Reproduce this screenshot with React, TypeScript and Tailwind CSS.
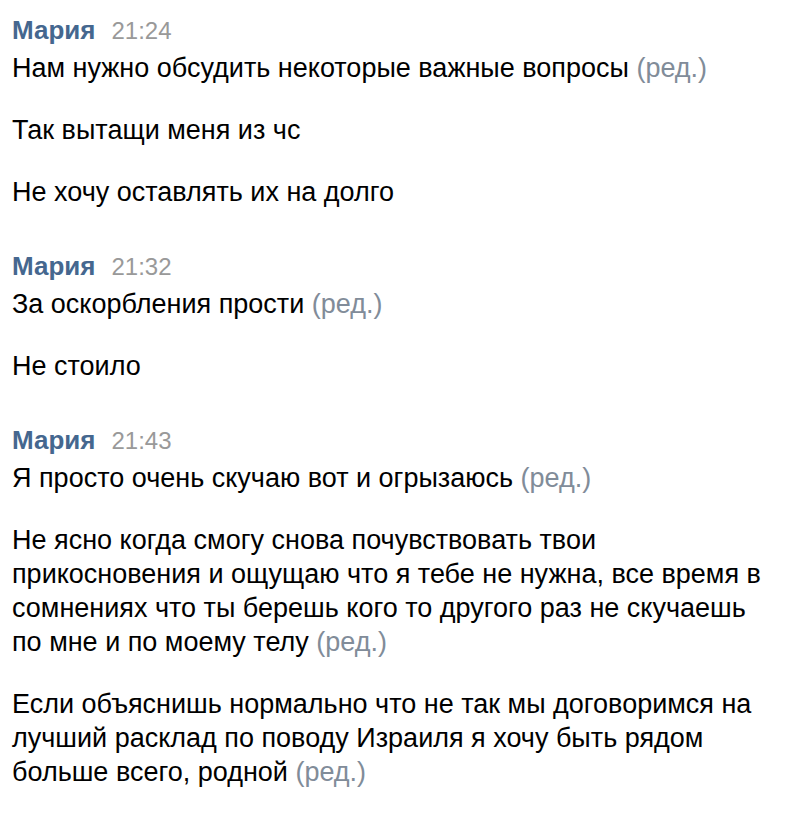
import React from "react";

type Msg = { lines: string[]; edited?: boolean };
type Group = { name: string; time: string; msgs: Msg[] };

const groups: Group[] = [
  {
    name: "Мария",
    time: "21:24",
    msgs: [
      { lines: ["Нам нужно обсудить некоторые важные вопросы"], edited: true },
      { lines: ["Так вытащи меня из чс"] },
      { lines: ["Не хочу оставлять их на долго"] },
    ],
  },
  {
    name: "Мария",
    time: "21:32",
    msgs: [
      { lines: ["За оскорбления прости"], edited: true },
      { lines: ["Не стоило"] },
    ],
  },
  {
    name: "Мария",
    time: "21:43",
    msgs: [
      { lines: ["Я просто очень скучаю вот и огрызаюсь"], edited: true },
      {
        lines: [
          "Не ясно когда смогу снова почувствовать твои",
          "прикосновения и ощущаю что я тебе не нужна, все время в",
          "сомнениях что ты берешь кого то другого раз не скучаешь",
          "по мне и по моему телу",
        ],
        edited: true,
      },
      {
        lines: [
          "Если объяснишь нормально что не так мы договоримся на",
          "лучший расклад по поводу Израиля я хочу быть рядом",
          "больше всего, родной",
        ],
        edited: true,
      },
    ],
  },
];

export default function App() {
  return (
    <div
      className="w-[812px] h-[838px] bg-white overflow-hidden pl-3 pr-0 pt-[13px]"
      style={{ fontFamily: '"Liberation Sans", Arial, sans-serif' }}
    >
      <div className="flex flex-col gap-[40px]">
        {groups.map((g, i) => (
          <div key={i} className="flex flex-col">
            <div className="flex items-baseline gap-[16px] h-[34px] leading-[34px] mb-[4px]">
              <span className="text-[26px] font-bold text-[#45678f]">{g.name}</span>
              <span className="text-[24px] text-[#999999]">{g.time}</span>
            </div>
            <div className="flex flex-col gap-[28px]">
              {g.msgs.map((m, j) => (
                <div key={j} className="flex flex-col text-[27px] leading-[34px] text-black">
                  {m.lines.map((l, k) => (
                    <span key={k} className="whitespace-nowrap">
                      {l}
                      {m.edited && k === m.lines.length - 1 && (
                        <span className="text-[#818c99]"> (ред.)</span>
                      )}
                    </span>
                  ))}
                </div>
              ))}
            </div>
          </div>
        ))}
      </div>
    </div>
  );
}
